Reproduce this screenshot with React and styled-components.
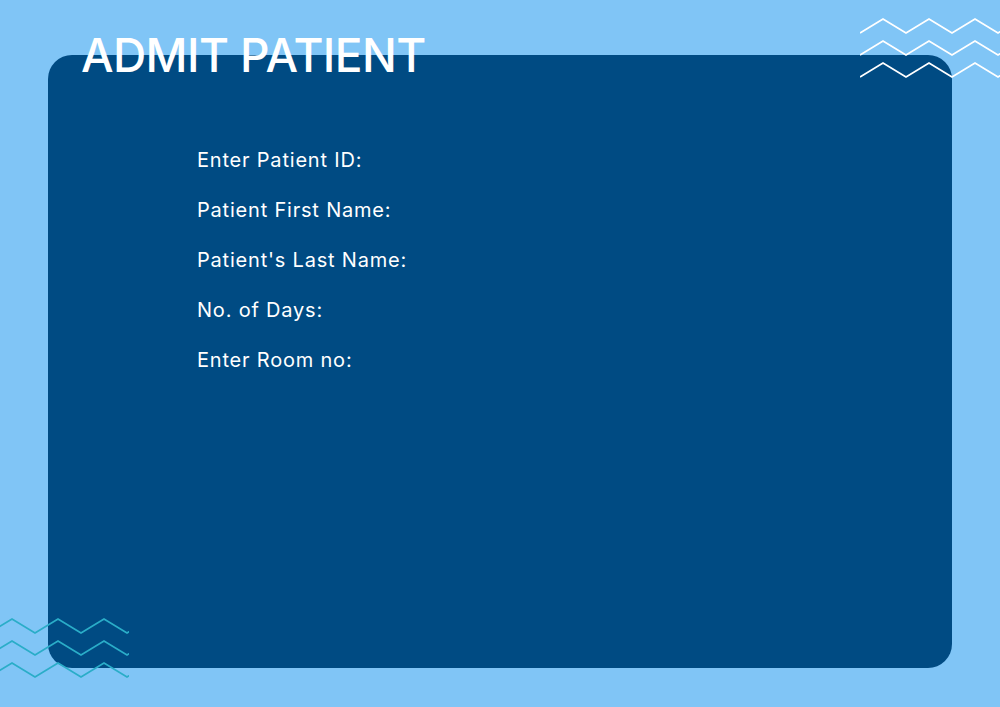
import React from 'react';
import styled, { createGlobalStyle } from 'styled-components';

const GlobalStyle = createGlobalStyle`
  html, body {
    margin: 0;
    padding: 0;
  }
  body {
    font-family: Inter, "Noto Sans", sans-serif;
    background: #80c5f6;
  }
`;

const Page = styled.main`
  position: relative;
  width: 1000px;
  height: 707px;
  box-sizing: border-box;
  padding: 55px 48px 39px;
  background: #80c5f6;
  overflow: hidden;
  display: flex;
`;

const Card = styled.section`
  flex: 1;
  background: #004b83;
  border-radius: 24px;
  box-sizing: border-box;
  padding: 80px 0 0 149px;
`;

// title sits half over the card edge
const Title = styled.h1`
  position: absolute;
  left: 81px;
  top: 27px;
  margin: 0;
  font-size: 46px;
  font-weight: 500;
  line-height: 56px;
  color: #ffffff;
  letter-spacing: -0.6px;
`;

const FieldList = styled.div`
  display: flex;
  flex-direction: column;
`;

const FieldLabel = styled.label`
  height: 50px;
  display: flex;
  align-items: center;
  font-size: 20px;
  letter-spacing: 0.8px;
  color: #ffffff;
`;

const Zigzag = styled.svg`
  position: absolute;
  top: ${(p) => p.$top}px;
  left: ${(p) => p.$left}px;
  pointer-events: none;
`;

const fields = [
  'Enter Patient ID:',
  'Patient First Name:',
  "Patient's Last Name:",
  'No. of Days:',
  'Enter Room no:',
];

// three stacked zigzag lines, period ~46px
function Waves({ top, left, width, color }) {
  const lines = [0, 22, 44].map((dy) => {
    let pts = [];
    let x = 0;
    let up = false;
    while (x <= width + 23) {
      pts.push(`${x},${(up ? 0 : 14) + dy + 1}`);
      x += 23;
      up = !up;
    }
    return <polyline key={dy} points={pts.join(' ')} fill="none" stroke={color} strokeWidth="1.7" />;
  });
  return (
    <Zigzag $top={top} $left={left} width={width} height={62} viewBox={`0 0 ${width} 62`}>
      {lines}
    </Zigzag>
  );
}

export default function App() {
  return (
    <>
      <GlobalStyle />
      <Page>
        <Title>ADMIT PATIENT</Title>
        <Card>
          <FieldList>
            {fields.map((f) => (
              <FieldLabel key={f}>{f}</FieldLabel>
            ))}
          </FieldList>
        </Card>
        <Waves top={18} left={860} width={140} color="#ffffff" />
        <Waves top={618} left={-11} width={140} color="#2aadc8" />
      </Page>
    </>
  );
}
